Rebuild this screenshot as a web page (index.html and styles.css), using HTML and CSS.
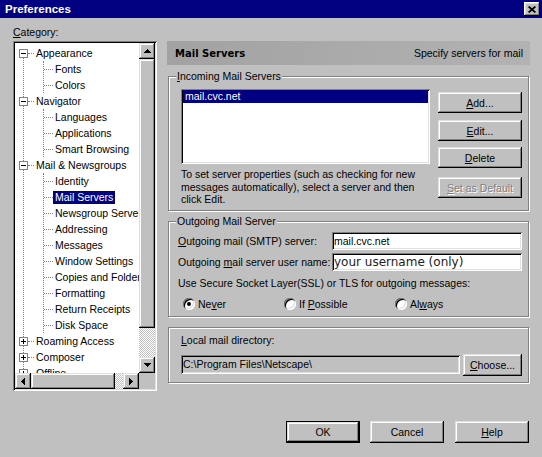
FILE: index.html
```html
<!DOCTYPE html>
<html lang="en">
<head>
  <meta charset="UTF-8">
  <meta name="viewport" content="width=device-width, initial-scale=1.0">
  <title>Preferences</title>
  <link rel="stylesheet" href="styles.css">
</head>
<body>

<div class="window">
  <div class="titlebar">
    <span class="title">Preferences</span>
    <span class="close-btn">
      <svg width="8" height="7" viewBox="0 0 8 7"><path d="M0.6 0.5L7.4 6.5M7.4 0.5L0.6 6.5" stroke="#000" stroke-width="1.7"/></svg>
    </span>
  </div>

  <div class="content">
    <div class="left">
      <div class="cat-label"><u>C</u>ategory:</div>
      <div class="tree">
        <div class="tree-view">
          <div class="tree-items">
            <div class="row"><span class="box"></span><span class="dash"></span><span class="label">Appearance</span></div>
            <div class="kids">
              <div class="row"><span class="dash"></span><span class="label">Fonts</span></div>
              <div class="row"><span class="dash"></span><span class="label">Colors</span></div>
            </div>
            <div class="row"><span class="box"></span><span class="dash"></span><span class="label">Navigator</span></div>
            <div class="kids">
              <div class="row"><span class="dash"></span><span class="label">Languages</span></div>
              <div class="row"><span class="dash"></span><span class="label">Applications</span></div>
              <div class="row"><span class="dash"></span><span class="label">Smart Browsing</span></div>
            </div>
            <div class="row"><span class="box"></span><span class="dash"></span><span class="label">Mail &amp; Newsgroups</span></div>
            <div class="kids">
              <div class="row"><span class="dash"></span><span class="label">Identity</span></div>
              <div class="row"><span class="dash"></span><span class="label sel">Mail Servers</span></div>
              <div class="row"><span class="dash"></span><span class="label">Newsgroup Servers</span></div>
              <div class="row"><span class="dash"></span><span class="label">Addressing</span></div>
              <div class="row"><span class="dash"></span><span class="label">Messages</span></div>
              <div class="row"><span class="dash"></span><span class="label">Window Settings</span></div>
              <div class="row"><span class="dash"></span><span class="label">Copies and Folders</span></div>
              <div class="row"><span class="dash"></span><span class="label">Formatting</span></div>
              <div class="row"><span class="dash"></span><span class="label">Return Receipts</span></div>
              <div class="row"><span class="dash"></span><span class="label">Disk Space</span></div>
            </div>
            <div class="row"><span class="box plus"></span><span class="dash"></span><span class="label">Roaming Access</span></div>
            <div class="row"><span class="box plus"></span><span class="dash"></span><span class="label">Composer</span></div>
            <div class="row"><span class="box plus"></span><span class="dash"></span><span class="label">Offline</span></div>
            <div class="row"><span class="box plus"></span><span class="dash"></span><span class="label">Advanced</span></div>
          </div>
        </div>
        <div class="vscroll">
          <span class="sb-btn"><svg width="7" height="4" viewBox="0 0 7 4"><path d="M3 0h1v1h1v1h1v1h1v1H0V3h1V2h1V1h1z"/></svg></span>
          <span class="thumb"></span>
          <span class="track"></span>
          <span class="sb-btn"><svg width="7" height="4" viewBox="0 0 7 4"><path d="M0 0h7v1H6v1H5v1H4v1H3V3H2V2H1V1H0z"/></svg></span>
        </div>
        <div class="hscroll">
          <span class="sb-btn"><svg width="4" height="7" viewBox="0 0 4 7"><path d="M3 0h1v7H3V6H2V5H1V4H0V3h1V2h1V1h1z"/></svg></span>
          <span class="thumb"></span>
          <span class="track"></span>
          <span class="sb-btn"><svg width="4" height="7" viewBox="0 0 4 7"><path d="M0 0h1v1h1v1h1v1h1v1H3v1H2v1H1v1H0z"/></svg></span>
        </div>
        <div class="corner"></div>
      </div>
    </div>

    <div class="panel">
      <div class="panel-head"><b>Mail Servers</b><span>Specify servers for mail</span></div>

      <fieldset class="group">
        <legend><u>I</u>ncoming Mail Servers</legend>
        <div class="in-body">
          <div>
            <div class="listbox"><div class="list-item">mail.cvc.net</div></div>
            <p class="hint">To set server properties (such as checking for new messages automatically), select a server and then click Edit.</p>
          </div>
          <div class="side-btns">
            <button class="btn add"><u>A</u>dd...</button>
            <button class="btn edit"><u>E</u>dit...</button>
            <button class="btn del"><u>D</u>elete</button>
            <button class="btn set-default" disabled><u>S</u>et as Default</button>
          </div>
        </div>
      </fieldset>

      <fieldset class="group outgoing">
        <legend>Outgoing Mail Server</legend>
        <div class="out-body">
          <div class="out-grid">
            <label><u>O</u>utgoing mail (SMTP) server:</label>
            <input class="field" type="text" value="mail.cvc.net">
            <label>Outgoing <u>m</u>ail server user name:</label>
            <input class="field big" type="text" value="your username (only)">
          </div>
          <div class="ssl">Use Secure Socket Layer(SSL) or TLS for outgoing messages:</div>
          <div class="radios">
            <span class="opt never"><span class="radio"><span class="dot"></span></span><span>Ne<u>v</u>er</span></span>
            <span class="opt possible"><span class="radio"></span><span>If <u>P</u>ossible</span></span>
            <span class="opt"><span class="radio"></span><span>Al<u>w</u>ays</span></span>
          </div>
        </div>
      </fieldset>

      <div class="local">
        <div class="local-label"><u>L</u>ocal mail directory:</div>
        <div class="dir-row">
          <div class="path">C:\Program Files\Netscape\</div>
          <button class="btn choose"><u>C</u>hoose...</button>
        </div>
      </div>
    </div>
  </div>

  <div class="footer">
    <button class="btn default">OK</button>
    <button class="btn cancel">Cancel</button>
    <button class="btn"><u>H</u>elp</button>
  </div>
</div>

</body>
</html>
```

FILE: styles.css
```css
body {
  margin: 0;
  font-family: "Liberation Sans", Arial, sans-serif;
  font-size: 10.5px;
  color: #000;
  background-color: #c0c0c0;
}
.window {
  width: 542px;
  height: 457px;
  background-color: #c0c0c0;
  display: flex;
  flex-direction: column;
  overflow: hidden;
}
.titlebar {
  flex: none;
  height: 18px;
  background-color: #000080;
  display: flex;
  align-items: center;
  justify-content: space-between;
  padding: 0 2px 0 5px;
}
.title {
  color: #fff;
  font-weight: bold;
  font-size: 11.5px;
}
.close-btn {
  width: 16px;
  height: 14px;
  background-color: #c0c0c0;
  box-shadow: inset -1px -1px #000, inset 1px 1px #fff, inset -2px -2px #808080, inset 2px 2px #dfdfdf;
  display: flex;
  align-items: center;
  justify-content: center;
}
.content {
  display: flex;
  gap: 10px;
  padding: 8px 12px 0 13px;
}

/* category tree */
.left {
  width: 144px;
}
.cat-label {
  height: 15px;
  line-height: 13px;
}
.tree {
  height: 350px;
  box-sizing: border-box;
  padding: 2px;
  box-shadow: inset 1px 1px #808080, inset -1px -1px #fff, inset 2px 2px #000, inset -2px -2px #dfdfdf;
  display: grid;
  grid-template-columns: 124px 16px;
  grid-template-rows: 330px 16px;
}
.tree-view {
  background-color: #fff;
  overflow: hidden;
}
.tree-items {
  position: relative;
  padding-top: 2px;
}
.tree-items::before {
  content: "";
  position: absolute;
  left: 8px;
  top: 10px;
  bottom: 0;
  border-left: 1px dotted #808080;
}
.row {
  height: 16px;
  display: flex;
  align-items: center;
  white-space: nowrap;
}
.box {
  position: relative;
  z-index: 1;
  flex: none;
  width: 9px;
  height: 9px;
  box-sizing: border-box;
  margin-left: 4px;
  border: 1px solid #808080;
  background-color: #fff;
}
.box::before {
  content: "";
  position: absolute;
  left: 1px;
  top: 3px;
  width: 5px;
  height: 1px;
  background-color: #000;
}
.box.plus::after {
  content: "";
  position: absolute;
  left: 3px;
  top: 1px;
  width: 1px;
  height: 5px;
  background-color: #000;
}
.dash {
  flex: none;
  width: 6px;
  border-top: 1px dotted #808080;
}
.kids {
  margin-left: 28px;
  border-left: 1px dotted #808080;
}
.kids .dash {
  width: 9px;
}
.label {
  padding: 0 2px;
  line-height: 13px;
}
.label.sel {
  background-color: #000080;
  color: #fff;
}

/* scrollbars */
.vscroll {
  display: flex;
  flex-direction: column;
}
.hscroll {
  display: flex;
}
.sb-btn, .thumb, .btn {
  background-color: #c0c0c0;
  box-shadow: inset -1px -1px #000, inset 1px 1px #dfdfdf, inset -2px -2px #808080, inset 2px 2px #fff;
}
.sb-btn {
  flex: none;
  width: 16px;
  height: 16px;
  display: flex;
  align-items: center;
  justify-content: center;
}
.thumb {
  flex: none;
}
.vscroll .thumb {
  height: 269px;
}
.hscroll .thumb {
  width: 84px;
}
.track {
  flex: 1;
  background: repeating-conic-gradient(#c0c0c0 0 25%, #fff 0 50%) 0 0 / 2px 2px;
}
.corner {
  background-color: #c0c0c0;
}

/* right side */
.panel {
  width: 363px;
  padding-top: 15px;
}
.panel-head {
  height: 24px;
  display: flex;
  align-items: center;
  justify-content: space-between;
  padding: 0 7px 0 8px;
  background: linear-gradient(to right, #a2a2a2, #b2b2b2);
}
.panel-head b {
  font-family: "DejaVu Sans", Verdana, sans-serif;
  font-size: 10px;
}
.group {
  width: 361px;
  box-sizing: border-box;
  min-width: 0;
  margin: 5px 0 0 1px;
  padding: 0;
  border: 1px solid #808080;
  box-shadow: inset 1px 1px #fff, 1px 1px #fff;
}
.group legend {
  margin-left: 7px;
  padding: 0 1px;
  line-height: 13px;
  background-color: #c0c0c0;
}
.group.outgoing {
  margin-top: 4px;
}
.in-body {
  display: grid;
  grid-template-columns: 249px 84px;
  column-gap: 8px;
  padding: 6px 6px 4px 12px;
}
.listbox {
  height: 75px;
  box-sizing: border-box;
  padding: 1px 2px;
  background-color: #fff;
  box-shadow: inset 1px 1px #808080, inset -1px -1px #fff, inset 2px 2px #000, inset -2px -2px #dfdfdf;
}
.list-item {
  height: 13px;
  line-height: 13px;
  padding-left: 2px;
  background-color: #000080;
  color: #fff;
}
.hint {
  margin: 4px 0 0;
  line-height: 12.5px;
}
.side-btns {
  display: flex;
  flex-direction: column;
}
.btn {
  font: inherit;
  color: #000;
  border: none;
  padding: 0;
  height: 21px;
}
.side-btns .add { margin-top: 3px; }
.side-btns .edit { margin-top: 7px; }
.side-btns .del { margin-top: 6px; }
.side-btns .set-default {
  margin-top: 9px;
  color: #808080;
  text-shadow: 1px 1px #fff;
}
.out-body {
  padding: 4px 6px 5px 9px;
}
.out-grid {
  display: grid;
  grid-template-columns: 154px 190px;
  row-gap: 3px;
  align-items: center;
}
.field {
  height: 18px;
  box-sizing: border-box;
  border: none;
  outline: none;
  padding: 0 2px;
  font: inherit;
  background-color: #fff;
  box-shadow: inset 1px 1px #808080, inset -1px -1px #fff, inset 2px 2px #000, inset -2px -2px #dfdfdf;
}
.field.big {
  font-family: "DejaVu Sans", Verdana, sans-serif;
  font-size: 12px;
  color: #222;
}
.ssl {
  margin-top: 6px;
  line-height: 13px;
}
.radios {
  display: flex;
  margin-top: 8px;
  padding-left: 5px;
  line-height: 13px;
}
.opt {
  display: flex;
  align-items: center;
  gap: 3px;
}
.opt.never { width: 101px; }
.opt.possible { width: 111px; }
.radio {
  width: 12px;
  height: 12px;
  border-radius: 50%;
  background-color: #fff;
  box-shadow: inset 1px 1px #808080, inset -1px -1px #fff, inset 2px 2px #000, inset -2px -2px #dfdfdf;
  display: flex;
  align-items: center;
  justify-content: center;
}
.dot {
  width: 4px;
  height: 4px;
  border-radius: 50%;
  background-color: #000;
}
.local {
  width: 361px;
  box-sizing: border-box;
  margin: 10px 0 0 1px;
  padding: 6px 6px 6px 12px;
  border: 1px solid #808080;
  box-shadow: inset 1px 1px #fff, 1px 1px #fff;
}
.local-label {
  line-height: 13px;
}
.dir-row {
  display: flex;
  align-items: center;
  gap: 3px;
  margin-top: 7px;
}
.path {
  width: 279px;
  height: 19px;
  box-sizing: border-box;
  padding-left: 2px;
  line-height: 19px;
  box-shadow: inset 1px 1px #808080, inset -1px -1px #fff, inset 2px 2px #000, inset -2px -2px #dfdfdf;
}
.btn.choose {
  width: 59px;
  height: 22px;
}
.footer {
  display: flex;
  justify-content: flex-end;
  gap: 10px;
  padding: 30px 13px 0 0;
}
.footer .btn {
  width: 74px;
  height: 22px;
}
.footer .cancel {
  margin-right: 1px;
}
.btn.default {
  box-sizing: border-box;
  border: 1px solid #000;
}
```
